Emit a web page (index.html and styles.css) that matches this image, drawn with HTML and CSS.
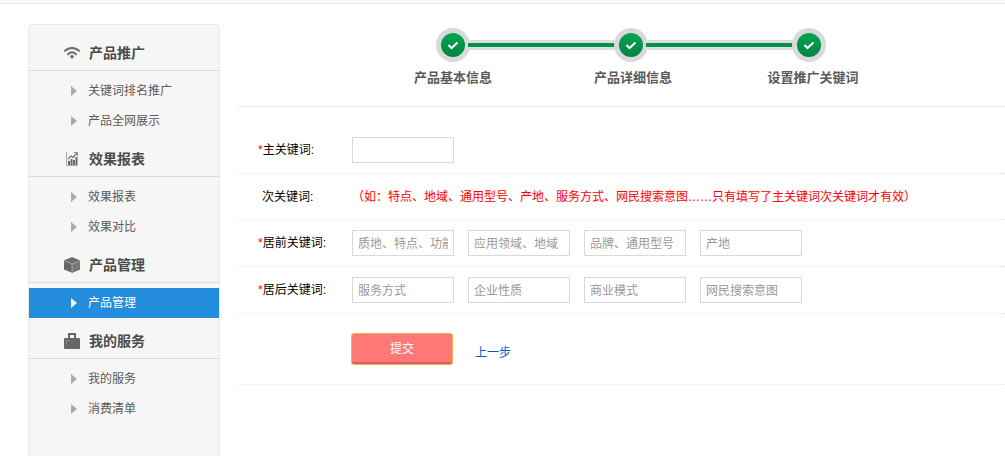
FILE: index.html
```html
<!DOCTYPE html>
<html lang="zh-CN">
<head>
    <meta charset="UTF-8">
    <meta name="viewport" content="width=device-width, initial-scale=1.0">
    <title>产品管理</title>
    <link rel="stylesheet" href="styles.css">
</head>
<body>
    <div class="topbar"></div>
    <div class="wrap">
        <!-- 左侧菜单 -->
        <aside class="sidebar">
            <h3 class="menu-title">
                <svg class="icon" viewBox="0 0 16 16">
                    <path d="M1 5.9C5 1.9 11 1.9 15 5.9" fill="none" stroke="#6a6a6a" stroke-width="2" stroke-linecap="round"/>
                    <path d="M4 9.2C6.4 6.9 9.6 6.9 12 9.2" fill="none" stroke="#6a6a6a" stroke-width="2" stroke-linecap="round"/>
                    <circle cx="8" cy="11.8" r="1.8" fill="#6a6a6a"/>
                </svg>
                产品推广
            </h3>
            <ul class="menu">
                <li><a href="#">关键词排名推广</a></li>
                <li><a href="#">产品全网展示</a></li>
            </ul>
            <h3 class="menu-title">
                <svg class="icon" viewBox="0 0 16 16">
                    <path d="M2.5 1v13.5H14" fill="none" stroke="#aaa" stroke-width="1"/>
                    <path d="M4 10h2v4H4zM6.5 8h2v6h-2zM9 9h2v5H9zM11.5 6h2v8h-2z" fill="#6a6a6a"/>
                    <path d="M4 8L7 5l2 1.5L13 2" fill="none" stroke="#777" stroke-width="1.3"/>
                    <path d="M10 1.5h3.5V5" fill="none" stroke="#888" stroke-width="1"/>
                </svg>
                效果报表
            </h3>
            <ul class="menu">
                <li><a href="#">效果报表</a></li>
                <li><a href="#">效果对比</a></li>
            </ul>
            <h3 class="menu-title">
                <svg class="icon" viewBox="0 0 16 16">
                    <path d="M8 0.3L16 3.4v9.2l-8 3.2-8-3.2V3.4z" fill="#666"/>
                    <path d="M8 0.3L16 3.4 8 6.8 0 3.4z" fill="#6e6e6e"/>
                    <path d="M8 6.8l8-3.4v9.2l-8 3.2z" fill="#777"/>
                    <path d="M0.3 3.8L8 7l7.7-3.2M8 7v8.5" fill="none" stroke="#bbb" stroke-width="0.7"/>
                </svg>
                产品管理
            </h3>
            <ul class="menu">
                <li class="active"><a href="#">产品管理</a></li>
            </ul>
            <h3 class="menu-title">
                <svg class="icon" viewBox="0 0 16 16">
                    <path d="M5 5V1h6v4" fill="none" stroke="#666" stroke-width="2"/>
                    <rect x="0" y="5" width="16" height="11" rx="1" fill="#666"/>
                    <path d="M2.5 12V7.5H5" fill="none" stroke="#8c8c8c" stroke-width="1"/>
                </svg>
                我的服务
            </h3>
            <ul class="menu">
                <li><a href="#">我的服务</a></li>
                <li><a href="#">消费清单</a></li>
            </ul>
        </aside>

        <main class="main">
            <!-- 步骤条 -->
            <div class="steps">
                <div class="track">
                    <span class="dot"><svg viewBox="0 0 12 12"><path d="M1.5 6l3 3 6-5.5"/></svg></span>
                    <span class="line"></span>
                    <span class="dot"><svg viewBox="0 0 12 12"><path d="M1.5 6l3 3 6-5.5"/></svg></span>
                    <span class="line"></span>
                    <span class="dot"><svg viewBox="0 0 12 12"><path d="M1.5 6l3 3 6-5.5"/></svg></span>
                </div>
                <ol class="step-names">
                    <li>产品基本信息</li>
                    <li>产品详细信息</li>
                    <li>设置推广关键词</li>
                </ol>
            </div>

            <!-- 关键词表单 -->
            <form class="form">
                <div class="row">
                    <label class="label" for="main-key"><i>*</i>主关键词:</label>
                    <input class="text" type="text" id="main-key">
                </div>
                <div class="row">
                    <span class="label indent">次关键词:</span>
                    <p class="tip">（如：特点、地域、通用型号、产地、服务方式、网民搜索意图……只有填写了主关键词次关键词才有效）</p>
                </div>
                <div class="row">
                    <label class="label" for="front-key"><i>*</i>居前关键词:</label>
                    <input class="text" type="text" id="front-key" placeholder="质地、特点、功能">
                    <input class="text" type="text" aria-label="应用领域、地域" placeholder="应用领域、地域">
                    <input class="text" type="text" aria-label="品牌、通用型号" placeholder="品牌、通用型号">
                    <input class="text" type="text" aria-label="产地" placeholder="产地">
                </div>
                <div class="row">
                    <label class="label" for="back-key"><i>*</i>居后关键词:</label>
                    <input class="text" type="text" id="back-key" placeholder="服务方式">
                    <input class="text" type="text" aria-label="企业性质" placeholder="企业性质">
                    <input class="text" type="text" aria-label="商业模式" placeholder="商业模式">
                    <input class="text" type="text" aria-label="网民搜索意图" placeholder="网民搜索意图">
                </div>
                <div class="row buttons">
                    <button class="submit" type="submit">提交</button>
                    <a class="prev" href="#">上一步</a>
                </div>
            </form>
        </main>
    </div>
</body>
</html>
```
FILE: styles.css
```css
* {
    box-sizing: border-box;
    margin: 0;
    padding: 0;
}

body {
    font: 12px/18px "Liberation Sans", "Noto Sans CJK SC", sans-serif;
    color: #000;
    background: #fff;
    display: flex;
    flex-direction: column;
    min-height: 100vh;
}

ul, ol {
    list-style: none;
}

a {
    text-decoration: none;
}

.topbar {
    height: 4px;
    background: #f7f7f7;
    border-bottom: 1px solid #e8e8e8;
}

.wrap {
    display: flex;
    flex: 1;
    gap: 18px;
    padding: 20px 0 0 28px;
}

/* 左侧菜单 */
.sidebar {
    flex: none;
    width: 192px;
    padding-top: 5px;
    background: #f6f6f6;
    border: 1px solid #e8e8e8;
    border-bottom: 0;
    border-radius: 5px 5px 0 0;
}

.menu-title {
    display: flex;
    align-items: center;
    gap: 9px;
    height: 41px;
    padding: 6px 0 0 35px;
    border-bottom: 1px solid #d9d9d9;
    font-size: 14px;
    color: #4c4c4c;
}

.icon {
    width: 16px;
    height: 16px;
}

.menu {
    padding-top: 5px;
}

.menu a {
    display: flex;
    align-items: center;
    gap: 11px;
    height: 30px;
    padding-left: 42px;
    line-height: 20px;
    color: #5a5a5a;
}

/* 小三角 */
.menu a::before {
    content: "";
    border: solid transparent;
    border-width: 5px 0 5px 6px;
    border-left-color: #aaa;
}

.menu .active a {
    background: #238cdc;
    color: #fff;
}

.menu .active a::before {
    border-left-color: #fff;
}

.main {
    flex: 1;
    min-width: 0;
}

/* 步骤条 */
.steps {
    height: 83px;
    padding: 4px 0 0 125px;
    border-bottom: 1px solid #eaeaea;
}

.track {
    display: flex;
    align-items: center;
    width: 390px;
    margin-left: 73px;
}

.dot {
    display: flex;
    align-items: center;
    justify-content: center;
    width: 34px;
    height: 34px;
    border: 5px solid #d9d9d9;
    border-radius: 50%;
    background: linear-gradient(#04a552, #038443);
}

.dot svg {
    width: 12px;
    height: 12px;
    fill: none;
    stroke: #fff;
    stroke-width: 2;
}

.line {
    flex: 1;
    height: 10px;
    margin: 0 -2px;
    border: solid #dedede;
    border-width: 3px 0;
    background: #03944c;
}

.step-names {
    display: grid;
    grid-template-columns: repeat(3, 180px);
    margin-top: 6px;
    text-align: center;
    font-size: 13px;
    font-weight: bold;
    line-height: 20px;
    color: #5a5a5a;
}

/* 表单 */
.form {
    padding-top: 20px;
}

.row {
    display: flex;
    align-items: center;
    gap: 14px;
    min-height: 46px;
    padding: 10px 0 10px 20px;
    border-bottom: 1px dotted #e6e6e6;
}

.label {
    width: 80px;
}

.label i {
    color: #f00;
    font-style: normal;
}

.indent {
    padding-left: 4px;
}

.tip {
    color: #f00;
}

.text {
    width: 102px;
    height: 26px;
    padding: 1px 5px 0;
    border: 1px solid #d9d9d9;
    font: inherit;
    color: #333;
}

.text::placeholder {
    color: #999;
}

.buttons {
    gap: 22px;
    padding: 19px 0 19px 113px;
}

.submit {
    width: 102px;
    height: 32px;
    border: 1px solid #f3b04f;
    border-radius: 3px;
    background: #ff7878;
    box-shadow: inset 0 -2px #dc6060;
    font: inherit;
    color: #fff;
    cursor: pointer;
}

.prev {
    padding-top: 8px;
    color: #0060c8;
}
```
